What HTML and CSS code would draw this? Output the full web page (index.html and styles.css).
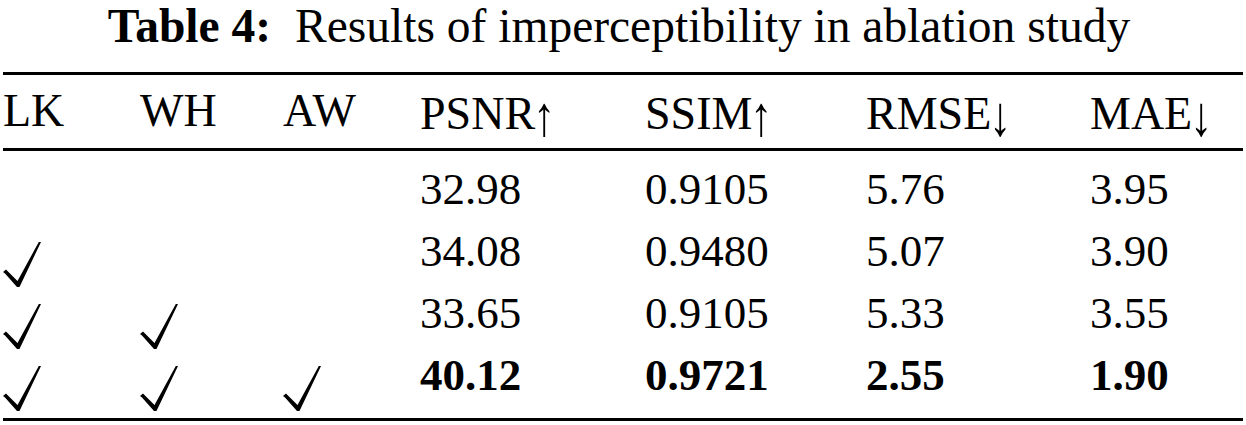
FILE: index.html
```html
<!DOCTYPE html>
<html lang="en">
<head>
<meta charset="utf-8">
<title>Table 4</title>
<link rel="stylesheet" href="styles.css">
</head>
<body>
<div class="page">
  <div class="caption"><b class="label">Table 4:</b><span class="ctext">Results of imperceptibility in ablation study</span></div>
  <div class="table">
    <div class="row head">
      <span>LK</span><span>WH</span><span>AW</span><span>PSNR<span class="arr">↑</span></span><span>SSIM<span class="arr">↑</span></span><span>RMSE<span class="arr">↓</span></span><span>MAE<span class="arr">↓</span></span>
    </div>
    <div class="body">
      <div class="row">
        <span></span><span></span><span></span><span>32.98</span><span>0.9105</span><span>5.76</span><span>3.95</span>
      </div>
      <div class="row">
        <span><svg class="check" viewBox="0 0 38 45"><polygon points="0,30 3,27.5 14.5,39 35.8,0 38,0 16.5,45 14,45 2,31.5"/></svg></span><span></span><span></span><span>34.08</span><span>0.9480</span><span>5.07</span><span>3.90</span>
      </div>
      <div class="row">
        <span><svg class="check" viewBox="0 0 38 45"><polygon points="0,30 3,27.5 14.5,39 35.8,0 38,0 16.5,45 14,45 2,31.5"/></svg></span><span><svg class="check" viewBox="0 0 38 45"><polygon points="0,30 3,27.5 14.5,39 35.8,0 38,0 16.5,45 14,45 2,31.5"/></svg></span><span></span><span>33.65</span><span>0.9105</span><span>5.33</span><span>3.55</span>
      </div>
      <div class="row best">
        <span><svg class="check" viewBox="0 0 38 45"><polygon points="0,30 3,27.5 14.5,39 35.8,0 38,0 16.5,45 14,45 2,31.5"/></svg></span><span><svg class="check" viewBox="0 0 38 45"><polygon points="0,30 3,27.5 14.5,39 35.8,0 38,0 16.5,45 14,45 2,31.5"/></svg></span><span><svg class="check" viewBox="0 0 38 45"><polygon points="0,30 3,27.5 14.5,39 35.8,0 38,0 16.5,45 14,45 2,31.5"/></svg></span><span>40.12</span><span>0.9721</span><span>2.55</span><span>1.90</span>
      </div>
    </div>
  </div>
</div>
</body>
</html>
```

FILE: styles.css
```css
html, body {
  margin: 0;
  padding: 0;
  background: #ffffff;
}

body {
  font-family: "Liberation Serif", "Times New Roman", serif;
  color: #000000;
}

.page {
  width: 1246px;
}

.caption {
  font-size: 47.5px;
  line-height: 53px;
  height: 53px;
  text-align: center;
  padding-right: 8px;
  margin-bottom: 19px;
  white-space: nowrap;
}

.label {
  font-weight: bold;
  margin-right: 24px;
}

.table {
  margin: 0 3px;
  border-top: 3px solid #000;
  border-bottom: 3px solid #000;
}

.row {
  display: grid;
  grid-template-columns: 137px 143px 137px 225px 221px 224px 1fr;
  font-size: 45px;
  line-height: 45px;
  height: 45px;
  white-space: nowrap;
}

.head {
  font-size: 46px;
  padding-top: 13px;
  padding-bottom: 15px;
  border-bottom: 3px solid #000;
}

.arr {
  display: inline-block;
  font-size: 56px;
  line-height: 45px;
  margin-left: -2px;
  transform: scaleX(0.8) translateY(6px);
  transform-origin: left bottom;
}

.body {
  display: flex;
  flex-direction: column;
  gap: 17px;
  padding-top: 16px;
  padding-bottom: 20px;
}

.best {
  font-weight: bold;
}

.check {
  display: block;
  width: 38px;
  height: 45px;
  margin-top: 13px;
  fill: #000;
}
```
